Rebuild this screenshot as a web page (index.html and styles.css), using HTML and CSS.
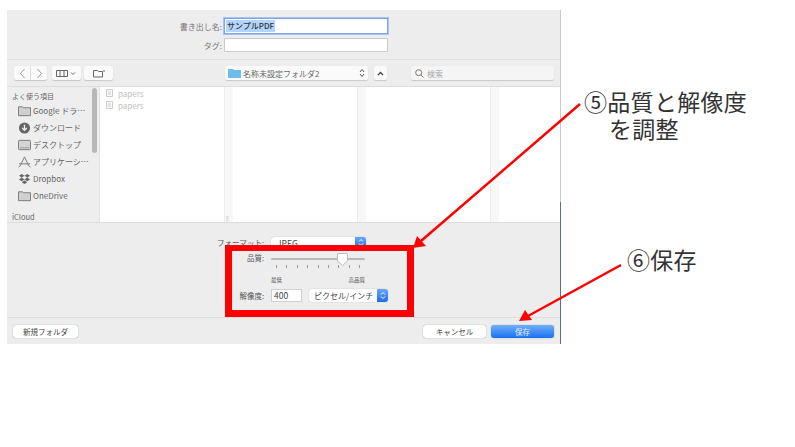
FILE: index.html
```html
<!DOCTYPE html>
<html lang="ja">
<head>
    <meta charset="UTF-8">
    <title>書き出し</title>
    <link rel="stylesheet" href="styles.css">
</head>
<body>
    <div class="slide">
        <div class="dialog">
            <div class="nameform">
                <label>書き出し名:</label>
                <div class="field field-active"><span class="selected">サンプルPDF</span></div>
                <label>タグ:</label>
                <div class="field"></div>
            </div>

            <div class="toolbar">
                <div class="btn nav-group">
                    <span class="nav-cell"><svg width="7" height="11" viewBox="0 0 7 11"><path d="M5.5 1 1.5 5.5 5.5 10" fill="none" stroke="#999"/></svg></span>
                    <span class="nav-cell nav-next"><svg width="7" height="11" viewBox="0 0 7 11"><path d="M1.5 1 5.5 5.5 1.5 10" fill="none" stroke="#999"/></svg></span>
                </div>
                <div class="btn view-btn">
                    <svg width="21" height="9" viewBox="0 0 21 9"><path d="M.5 1.5h11v6H.5zM4 1.5v6M8 1.5v6" fill="none" stroke="#666"/><path d="M15 3.5l2 2 2-2" fill="none" stroke="#666"/></svg>
                </div>
                <div class="btn new-btn">
                    <svg width="12" height="9" viewBox="0 0 12 9"><path d="M.5 8V1.5h4l1 1h4V8z" fill="none" stroke="#666"/><path d="M10 2h2" stroke="#666"/></svg>
                </div>
                <div class="btn location">
                    <svg width="13" height="10" viewBox="0 0 13 10"><path d="M0 1h5l1 1h7v8H0z" fill="#6cbcec"/></svg>
                    <span class="location-name">名称未設定フォルダ2</span>
                    <svg width="6" height="10" viewBox="0 0 6 10"><path d="M1 4l2-2.500 2 2.500M1 6l2 2.500 2-2.500" fill="none" stroke="#555"/></svg>
                </div>
                <div class="btn up-btn">
                    <svg width="7" height="5" viewBox="0 0 7 5"><path d="M1 4l2.500-2.500L6 4" fill="none" stroke="#444" stroke-width="1.300"/></svg>
                </div>
                <div class="btn search">
                    <svg width="9" height="9" viewBox="0 0 9 9"><circle cx="3.700" cy="3.700" r="3" fill="none" stroke="#777"/><path d="M6 6l2.500 2.500" stroke="#777"/></svg>
                    <span>検索</span>
                </div>
            </div>

            <div class="browser">
                <div class="sidebar">
                    <div class="side-head">よく使う項目</div>
                    <div class="side-item">
                        <svg viewBox="0 0 14 11"><path d="M.5 10.500V1h4.500l1 1h7.500v8.500z" fill="#d0d0d0" stroke="#777"/></svg>
                        <span>Google ドラ…</span>
                    </div>
                    <div class="side-item">
                        <svg viewBox="0 0 14 12"><circle cx="7" cy="6" r="6" fill="#666"/><path d="M7 2.500v6M4.500 6 7 8.500 9.500 6" fill="none" stroke="#eee" stroke-width="1.400"/></svg>
                        <span>ダウンロード</span>
                    </div>
                    <div class="side-item">
                        <svg viewBox="0 0 14 11"><rect x=".5" y=".5" width="13" height="10" rx="1" fill="#d4d4d4" stroke="#777"/><path d="M2 8.500h10" stroke="#999"/></svg>
                        <span>デスクトップ</span>
                    </div>
                    <div class="side-item">
                        <svg viewBox="0 0 14 12"><path d="M7 .5 2.500 10M7 .5l4.500 9.500M1 8h12M.5 11.500 2.500 10M13.500 11.500 11.500 10" fill="none" stroke="#777"/></svg>
                        <span>アプリケーシ…</span>
                    </div>
                    <div class="side-item">
                        <svg viewBox="0 0 14 12"><path d="M4 .5 7 2.500 4 4.500 1 2.500zM10 .5l3 2-3 2-3-2zM4 4.500l3 2-3 2-3-2zM10 4.500l3 2-3 2-3-2zM7 7.500l3 2-3 2-3-2z" fill="#666"/></svg>
                        <span>Dropbox</span>
                    </div>
                    <div class="side-item">
                        <svg viewBox="0 0 14 11"><path d="M.5 10.500V1h4.500l1 1h7.500v8.500z" fill="#d0d0d0" stroke="#777"/></svg>
                        <span>OneDrive</span>
                    </div>
                    <div class="side-head side-icloud">iCloud</div>
                    <div class="side-scroll"></div>
                </div>
                <div class="column column-first">
                    <div class="file"><svg width="7" height="8" viewBox="0 0 7 8"><path d="M.5.5h6v7h-6zM2 3h3M2 5h3" fill="#fafafa" stroke="#ccc"/></svg>papers</div>
                    <div class="file"><svg width="7" height="8" viewBox="0 0 7 8"><path d="M.5.5h6v7h-6zM2 3h3M2 5h3" fill="#fafafa" stroke="#ccc"/></svg>papers</div>
                </div>
                <div class="strip"><span class="grip">||</span></div>
                <div class="column"></div>
                <div class="strip"></div>
                <div class="column"></div>
                <div class="strip"></div>
                <div class="column column-last"></div>
            </div>

            <div class="options">
                <div class="options-grid">
                    <label>フォーマット:</label>
                    <div class="popup format-popup">
                        <span class="popup-text">JPEG</span>
                        <span class="stepper"><svg width="6" height="9" viewBox="0 0 6 9"><path d="M1 3.500l2-2 2 2M1 5.500l2 2 2-2" fill="none" stroke="#fff"/></svg></span>
                    </div>
                    <label class="quality-label">品質:</label>
                    <div class="quality">
                        <div class="slider">
                            <svg class="thumb" width="11" height="13" viewBox="0 0 11 13"><path d="M1 .5h9a.5.5 0 0 1 .5.500v7L5.500 12.500.5 8V1A.5.5 0 0 1 1 .5z" fill="#fff" stroke="#bbb"/></svg>
                        </div>
                        <div class="ticks"><i></i><i></i><i></i><i></i><i></i><i></i><i></i><i></i><i></i></div>
                        <div class="quality-ends"><span>最低</span><span>高品質</span></div>
                    </div>
                    <label>解像度:</label>
                    <div class="res-row">
                        <div class="res-input">400</div>
                        <div class="popup unit-popup">
                            <span class="popup-text">ピクセル/インチ</span>
                            <span class="stepper"><svg width="6" height="9" viewBox="0 0 6 9"><path d="M1 3.500l2-2 2 2M1 5.500l2 2 2-2" fill="none" stroke="#fff"/></svg></span>
                        </div>
                    </div>
                </div>
            </div>

            <div class="footer">
                <div class="push-btn new-folder">新規フォルダ</div>
                <div class="footer-right">
                    <div class="push-btn cancel">キャンセル</div>
                    <div class="push-btn save">保存</div>
                </div>
            </div>
        </div>

        <!-- 赤枠と矢印 -->
        <div class="redbox"></div>
        <svg class="arrows" width="795" height="447" viewBox="0 0 795 447">
            <path d="M580 104 421 241" stroke="#f00" stroke-width="2.500" fill="none"/>
            <path d="M413 248 417 236 426 246z" fill="#f00"/>
            <path d="M621 265 528 316" stroke="#f00" stroke-width="2.500" fill="none"/>
            <path d="M519 321 525 310 532 320z" fill="#f00"/>
        </svg>

        <div class="note note-quality">
            <div>⑤品質と解像度</div>
            <div class="note-indent">を調整</div>
        </div>
        <div class="note note-save">⑥保存</div>
    </div>
</body>
</html>
```

FILE: styles.css
```css
* {
    box-sizing: border-box;
}
body {
    margin: 0;
    background: #fff;
    font-family: "Noto Sans CJK JP", "Liberation Sans", sans-serif;
}
.slide {
    position: relative;
    width: 795px;
    height: 447px;
    overflow: hidden;
    padding: 10px 0 0 7px;
}
.dialog {
    width: 554px;
    height: 334px;
    background: #ededed;
    border-right: 1px solid #c9c9cc;
    display: flex;
    flex-direction: column;
    color: #555;
    font-size: 8px;
}

/* name and tag */
.nameform {
    height: 50px;
    padding-top: 8px;
    display: grid;
    grid-template-columns: 215px 164px;
    grid-template-rows: 16px 14px;
    column-gap: 2px;
    row-gap: 4px;
    border-bottom: 1px solid #e0e0e0;
    align-items: center;
}
.nameform label {
    text-align: right;
    color: #777;
}
.field {
    height: 14px;
    background: #fff;
    border: 1px solid #ccc;
    font-size: 8px;
    line-height: 12px;
}
.field-active {
    height: 16px;
    border: 1px solid #7aa5ee;
    box-shadow: 0 0 0 1px #a9c4f2;
    padding: 1px;
    color: #333;
}
.selected {
    display: inline-block;
    background: #b3d4fc;
    line-height: 12px;
    padding: 0 1px;
    font-weight: 500;
}

/* toolbar */
.toolbar {
    height: 27px;
    display: flex;
    align-items: center;
    padding-left: 7px;
    border-bottom: 1px solid #dedede;
}
.btn {
    height: 14px;
    background: #fafafa;
    border-radius: 2px;
    box-shadow: 0 1px 1px #c8c8c8;
    display: flex;
    align-items: center;
    justify-content: center;
}
.nav-group {
    width: 33px;
}
.nav-cell {
    flex: 1;
    height: 100%;
    display: flex;
    align-items: center;
    justify-content: center;
}
.nav-next {
    border-left: 1px solid #ddd;
}
.view-btn {
    width: 29px;
    margin-left: 5px;
}
.new-btn {
    width: 29px;
    margin-left: 3px;
}
.location {
    width: 143px;
    margin-left: 112px;
    justify-content: flex-start;
    padding: 0 3px 0 3px;
}
.location-name {
    flex: 1;
    margin-left: 2px;
    color: #666;
}
.up-btn {
    width: 13px;
    margin-left: 6px;
}
.search {
    width: 143px;
    margin-left: 24px;
    justify-content: flex-start;
    padding-left: 4px;
    background: #f5f5f5;
    color: #aaa;
}
.search span {
    margin-left: 3px;
}

/* file browser */
.browser {
    height: 135px;
    display: flex;
    overflow: hidden;
}
.sidebar {
    position: relative;
    width: 93px;
    flex: none;
    background: #eeeeee;
    padding: 4px 0 0 5px;
    border-right: 1px solid #e2e2e2;
}
.side-head {
    height: 10px;
    line-height: 10px;
    font-size: 7px;
    color: #666;
}
.side-item {
    height: 17px;
    display: flex;
    align-items: center;
    gap: 2px;
    padding-left: 6px;
    color: #666;
    font-size: 8px;
    white-space: nowrap;
}
.side-item svg {
    width: 13px;
    height: 12px;
    flex: none;
}
.side-head + .side-item {
    margin-top: 1px;
}
.side-icloud {
    margin-top: 8px;
    font-size: 7.500px;
}
.side-scroll {
    position: absolute;
    top: 1px;
    right: 2px;
    width: 5px;
    height: 65px;
    background: #b8b8b8;
    border-radius: 3px;
}
.column {
    width: 124px;
    flex: none;
    background: #fff;
}
.column-first {
    padding: 0 0 0 6px;
}
.column-last {
    width: auto;
    flex: 1;
}
.file {
    height: 12px;
    display: flex;
    align-items: center;
    gap: 5px;
    font-size: 8px;
    color: #c2c2c2;
}
.strip {
    width: 9px;
    flex: none;
    background: #f8f8f8;
    border-left: 1px solid #ececec;
    display: flex;
    align-items: flex-end;
}
.grip {
    font-size: 5px;
    line-height: 9px;
    color: #aaa;
    padding-left: 1px;
}

/* format options */
.options {
    height: 96px;
    padding-top: 13px;
    border-top: 1px solid #dedede;
    border-bottom: 1px solid #dedede;
}
.options-grid {
    display: grid;
    grid-template-columns: 257px auto;
    column-gap: 7px;
    grid-template-rows: 13px 40px 13px;
    row-gap: 0;
    align-items: center;
}
.options-grid label {
    text-align: right;
    font-size: 7.500px;
    color: #555;
}
.quality-label {
    align-self: start;
    padding-top: 3px;
}
.popup {
    height: 12px;
    background: #fff;
    border-radius: 3px;
    box-shadow: 0 0 1px #999;
    display: flex;
    align-items: center;
    font-size: 8.500px;
    color: #444;
}
.format-popup {
    width: 95px;
}
.popup-text {
    flex: 1;
    padding-left: 6px;
    white-space: nowrap;
}
.stepper {
    width: 11px;
    height: 100%;
    flex: none;
    background: linear-gradient(#6aa6f7, #1b6fe6);
    border-radius: 0 3px 3px 0;
    display: flex;
    align-items: center;
    justify-content: center;
}
.quality {
    width: 94px;
    align-self: start;
    padding-top: 9px;
}
.slider {
    position: relative;
    height: 2px;
    background: #b9b9b9;
    border-radius: 1px;
}
.thumb {
    position: absolute;
    left: 66px;
    top: -5px;
}
.ticks {
    display: flex;
    justify-content: space-between;
    padding: 0 5px;
    margin-top: 5px;
}
.ticks i {
    width: 1px;
    height: 3px;
    background: #999;
}
.quality-ends {
    display: flex;
    justify-content: space-between;
    margin-top: 8px;
    font-size: 5.500px;
    line-height: 8px;
    color: #555;
}
.res-row {
    display: flex;
    align-items: center;
    gap: 7px;
}
.res-input {
    width: 31px;
    height: 13px;
    background: #fff;
    border: 1px solid #d0d0d0;
    padding-left: 2px;
    font-size: 8.500px;
    line-height: 11px;
    color: #444;
}
.unit-popup {
    width: 79px;
    height: 13px;
}
.unit-popup .popup-text {
    padding-left: 5px;
    font-size: 8px;
}

/* bottom buttons */
.footer {
    flex: 1;
    display: flex;
    justify-content: space-between;
    padding: 7px 6px 0 6px;
}
.footer-right {
    display: flex;
    gap: 5px;
}
.push-btn {
    height: 13px;
    background: #fff;
    border-radius: 3px;
    box-shadow: 0 0 1px #777;
    text-align: center;
    font-size: 7.500px;
    line-height: 13px;
    color: #444;
}
.new-folder {
    width: 65px;
}
.cancel {
    width: 63px;
}
.save {
    width: 63px;
    background: linear-gradient(#6fb0fa, #1a70ee);
    color: #e8f1ff;
}

/* annotations laid over the dialog */
.redbox {
    position: absolute;
    left: 225px;
    top: 245px;
    width: 189px;
    height: 72px;
    border: 7px solid #f00;
    border-top-width: 6px;
}
.arrows {
    position: absolute;
    left: 0;
    top: 0;
}
.note {
    position: absolute;
    font-size: 23px;
    line-height: 27px;
    letter-spacing: .3px;
    color: #333;
    white-space: nowrap;
}
.note-quality {
    left: 584px;
    top: 88px;
}
.note-indent {
    margin-left: 25px;
}
.note-save {
    left: 627px;
    top: 246px;
}
.dialog::after {
    content: "";
    position: absolute;
    left: 560px;
    top: 202px;
    width: 1px;
    height: 142px;
    background: #5d6f8c;
}
```
